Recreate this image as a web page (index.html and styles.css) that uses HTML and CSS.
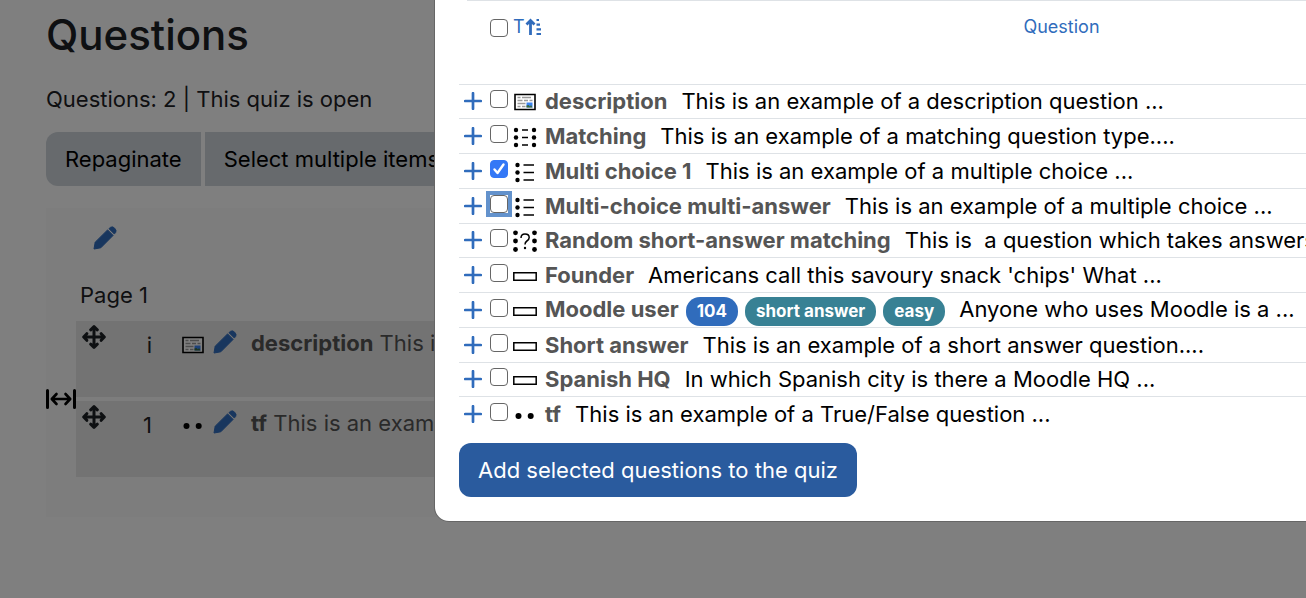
FILE: index.html
```html
<!DOCTYPE html>
<html lang="en">
<head>
<meta charset="utf-8">
<title>Questions</title>
<link rel="stylesheet" href="styles.css">
</head>
<body>
<svg class="sprite" aria-hidden="true">
  <symbol id="pencil" viewBox="0 0 24 24"><path d="M1 23 2.200 16.200 14.600 3.900 20.100 9.400 7.800 21.800Z" stroke="currentColor" stroke-width="1" stroke-linejoin="round" fill="currentColor"/><path d="M15.900 2.700 17.500 1.300Q19.500 0 21.500 2Q24 4.300 22.700 6.500L21.300 8.100Z" fill="currentColor" stroke="currentColor" stroke-width=".8" stroke-linejoin="round"/></symbol>
  <symbol id="move" viewBox="0 0 24 24"><path d="M12 2v20M2 12h20M8.700 4.800 12 1.700l3.300 3.100M8.700 19.200l3.300 3.100 3.300-3.100M4.800 8.700 1.700 12l3.100 3.300M19.200 8.700l3.100 3.300-3.100 3.300" fill="none" stroke="currentColor" stroke-width="3" stroke-linecap="round" stroke-linejoin="round"/></symbol>
  <symbol id="plus" viewBox="0 0 18 18"><path d="M9 1.200v15.600M1.200 9h15.600" stroke="currentColor" stroke-width="2.700" stroke-linecap="round"/></symbol>
  <symbol id="q-description" viewBox="0 0 24 24"><path d="M2 4.500h20v15H2z" fill="#fff" stroke="#000" stroke-width="1.600"/><path d="M4.500 7.500h3M9 7.500h9M4.500 10.500h5M11 10.500h4M16.500 10.500h3M4.500 13.500h8M4.500 16.500h3M9 16.500h3.500" stroke="#9a9a9a" stroke-width="1.400"/><path d="M13.500 12.500h6v5h-6z" fill="#3b83f0"/><path d="M13.500 17.500v-2l2-.5 1.500 1.500 1-1.500 1.500 2.500z" fill="#3d6b3a"/></symbol>
  <symbol id="q-match" viewBox="0 0 24 24"><g><circle cx="3" cy="5" r="2.200"/><circle cx="3" cy="12.500" r="2.200"/><circle cx="3" cy="20" r="2.200"/><circle cx="21" cy="5" r="2.200"/><circle cx="21" cy="12.500" r="2.200"/><circle cx="21" cy="20" r="2.200"/></g><path d="M9 5h6M9 12.500h6M9 20h6" stroke="#000" stroke-width="1.500"/></symbol>
  <symbol id="q-multi" viewBox="0 0 24 24"><circle cx="4.500" cy="5" r="2.200"/><circle cx="4.500" cy="12.500" r="2.200"/><circle cx="4.500" cy="20" r="2.200"/><path d="M10.500 5H21M10.500 12.500H21M10.500 20H21" stroke="#000" stroke-width="1.500"/></symbol>
  <symbol id="q-random" viewBox="0 0 24 24"><circle cx="2.500" cy="3.800" r="2.400"/><circle cx="2.500" cy="12" r="2.400"/><circle cx="2.500" cy="20.500" r="2.400"/><circle cx="21.500" cy="3.800" r="2.400"/><circle cx="21.500" cy="12" r="2.400"/><circle cx="21.500" cy="20.500" r="2.400"/><path d="M8 9q0-4 4-4 4.200 0 4.200 3.600 0 2-2.300 3.400-1.900 1.100-1.900 3.600" fill="none" stroke="#000" stroke-width="1.500"/><circle cx="12" cy="19" r="1.200"/></symbol>
  <symbol id="q-short" viewBox="0 0 24 24"><path d="M.800 8.800h22.400v7.400H.800z" fill="#fff" stroke="#000" stroke-width="1.500"/></symbol>
  <symbol id="q-tf" viewBox="0 0 24 24"><circle cx="5.500" cy="13" r="3"/><circle cx="17.700" cy="13" r="3"/></symbol>
</svg>

<main class="page">
  <h1 class="title">Questions</h1>
  <p class="status">Questions: 2 | This quiz is open</p>
  <div class="toolbar">
    <button class="tool" type="button">Repaginate</button>
    <button class="tool" type="button">Select multiple items</button>
  </div>
  <section class="panel">
    <button class="icon-button heading-edit" type="button" aria-label="Edit heading"><svg class="icon"><use href="#pencil"/></svg></button>
    <h2 class="page-name">Page 1</h2>
    <ul class="slots">
      <li class="slot">
        <svg class="icon move"><use href="#move"/></svg>
        <span class="number">i</span>
        <svg class="icon kind"><use href="#q-description"/></svg>
        <svg class="icon edit"><use href="#pencil"/></svg>
        <span class="slot-text"><b>description</b> This is</span>
      </li>
      <li class="slot">
        <svg class="icon move"><use href="#move"/></svg>
        <span class="number">1</span>
        <svg class="icon kind"><use href="#q-tf"/></svg>
        <svg class="icon edit"><use href="#pencil"/></svg>
        <span class="slot-text"><b>tf</b> This is an example</span>
      </li>
      <li class="split"><svg viewBox="0 0 30 20"><path d="M1.500 1.500v17M28.500 1.500v17" stroke="#000" stroke-width="3" stroke-linecap="round"/><path d="M6 10h18M10.500 5 5.800 10l4.700 5M19.500 5l4.700 5-4.700 5" fill="none" stroke="#000" stroke-width="2.600" stroke-linecap="round" stroke-linejoin="round"/></svg></li>
    </ul>
  </section>
</main>

<div class="backdrop"></div>
<div class="modal" role="dialog" aria-label="Add from the question bank">
  <div class="rule"></div>
  <table class="bank">
    <thead>
      <tr>
        <th class="col-add"></th>
        <th class="col-check"><input class="check" type="checkbox" aria-label="Select all"></th>
        <th class="col-kind"><a class="sort" href="#">T<svg class="sort-icon" viewBox="0 0 16 18"><path d="M5.500 17V3M1.500 6.500l4-4 4 4" fill="none" stroke="currentColor" stroke-width="2.800"/><path d="M11.500 2h2.500M11.500 6.700h3.500M11.500 11.300h4.500M11.500 16h4.500" stroke="currentColor" stroke-width="2.200"/></svg></a></th>
        <th class="col-question"><a class="sort" href="#">Question</a></th>
      </tr>
    </thead>
    <tbody>
      <tr><td><button class="icon-button" type="button" aria-label="Add"><svg class="plus"><use href="#plus"/></svg></button></td><td><input class="check" type="checkbox" id="q1"></td><td><svg class="icon"><use href="#q-description"/></svg></td><td><label class="name" for="q1">description</label><span class="text">This is an example of a description question ...</span></td></tr>
      <tr><td><button class="icon-button" type="button" aria-label="Add"><svg class="plus"><use href="#plus"/></svg></button></td><td><input class="check" type="checkbox" id="q2"></td><td><svg class="icon"><use href="#q-match"/></svg></td><td><label class="name" for="q2">Matching</label><span class="text">This is an example of a matching question type....</span></td></tr>
      <tr><td><button class="icon-button" type="button" aria-label="Add"><svg class="plus"><use href="#plus"/></svg></button></td><td><input class="check" type="checkbox" id="q3" checked></td><td><svg class="icon"><use href="#q-multi"/></svg></td><td><label class="name" for="q3">Multi choice 1</label><span class="text">This is an example of a multiple choice ...</span></td></tr>
      <tr><td><button class="icon-button" type="button" aria-label="Add"><svg class="plus"><use href="#plus"/></svg></button></td><td><div class="focus-ring"><input class="check" type="checkbox" id="q4"></div></td><td><svg class="icon"><use href="#q-multi"/></svg></td><td><label class="name" for="q4">Multi-choice multi-answer</label><span class="text">This is an example of a multiple choice ...</span></td></tr>
      <tr><td><button class="icon-button" type="button" aria-label="Add"><svg class="plus"><use href="#plus"/></svg></button></td><td><input class="check" type="checkbox" id="q5"></td><td><svg class="icon"><use href="#q-random"/></svg></td><td><label class="name" for="q5">Random short-answer matching</label><span class="text">This is&nbsp; a question which takes answers</span></td></tr>
      <tr><td><button class="icon-button" type="button" aria-label="Add"><svg class="plus"><use href="#plus"/></svg></button></td><td><input class="check" type="checkbox" id="q6"></td><td><svg class="icon"><use href="#q-short"/></svg></td><td><label class="name" for="q6">Founder</label><span class="text">Americans call this savoury snack 'chips' What ...</span></td></tr>
      <tr><td><button class="icon-button" type="button" aria-label="Add"><svg class="plus"><use href="#plus"/></svg></button></td><td><input class="check" type="checkbox" id="q7"></td><td><svg class="icon"><use href="#q-short"/></svg></td><td><label class="name" for="q7">Moodle user</label><span class="tags"><span class="tag id">104</span><span class="tag">short answer</span><span class="tag">easy</span></span><span class="text">Anyone who uses Moodle is a ...</span></td></tr>
      <tr><td><button class="icon-button" type="button" aria-label="Add"><svg class="plus"><use href="#plus"/></svg></button></td><td><input class="check" type="checkbox" id="q8"></td><td><svg class="icon"><use href="#q-short"/></svg></td><td><label class="name" for="q8">Short answer</label><span class="text">This is an example of a short answer question....</span></td></tr>
      <tr><td><button class="icon-button" type="button" aria-label="Add"><svg class="plus"><use href="#plus"/></svg></button></td><td><input class="check" type="checkbox" id="q9"></td><td><svg class="icon"><use href="#q-short"/></svg></td><td><label class="name" for="q9">Spanish HQ</label><span class="text">In which Spanish city is there a Moodle HQ ...</span></td></tr>
      <tr><td><button class="icon-button" type="button" aria-label="Add"><svg class="plus"><use href="#plus"/></svg></button></td><td><input class="check" type="checkbox" id="q10"></td><td><svg class="icon"><use href="#q-tf"/></svg></td><td><label class="name" for="q10">tf</label><span class="text">This is an example of a True/False question ...</span></td></tr>
    </tbody>
  </table>
  <button class="submit" type="button">Add selected questions to the quiz</button>
</div>
</body>
</html>
```
FILE: styles.css
```css
* { box-sizing: border-box; }
html, body { height: 100%; }
body {
  margin: 0;
  position: relative;
  overflow: hidden;
  background: #fff;
  color: #1d2125;
  font: 22px/32px Inter, "Liberation Sans", sans-serif;
}
button { font: inherit; border: 0; padding: 0; cursor: pointer; }
.sprite { position: absolute; width: 0; height: 0; }
.icon { display: block; width: 24px; height: 24px; }
.icon-button { display: block; background: none; color: #306cbc; }

.page { padding: 9px 0 0 46px; }
.title { margin: 0 0 22px; font-size: 42px; line-height: 52px; font-weight: 500; }
.status { margin: 0 0 17px; }
.toolbar { display: flex; gap: 4px; }
.tool {
  height: 54px;
  padding: 0 19px;
  background: #ced4da;
  color: #000;
  white-space: nowrap;
}
.tool:first-child { border-radius: 12px 0 0 12px; }
.tool:last-child { border-radius: 0 12px 12px 0; }
.panel { margin-top: 22px; padding: 18px 0 40px 30px; background: #fafafa; }
.heading-edit { margin-left: 17px; }
.page-name { margin: 29px 0 10px 4px; font-size: 22px; line-height: 32px; font-weight: 400; }
.slots {
  position: relative;
  display: flex;
  flex-direction: column;
  gap: 4px;
  margin: 0;
  padding: 0;
  list-style: none;
}
.slot {
  display: grid;
  grid-template-columns: 24px 38px 24px 24px 1fr;
  column-gap: 8px;
  align-items: start;
  height: 76px;
  padding: 4px 0 0 6px;
  background: #e6e6e6;
}
.number { padding: 4px 0; text-align: right; }
.slot .kind { margin: 8px 0 0 21px; }
.slot .edit { margin: 5px 0 0 21px; color: #306cbc; }
.slot-text { margin: 2px 0 0 27px; color: #555; white-space: nowrap; }
.split { position: absolute; left: -30px; top: 68px; width: 30px; height: 20px; }
.split svg { display: block; }

.backdrop { position: absolute; inset: 0; background: rgba(0, 0, 0, .5); }
.modal {
  position: absolute;
  left: 435px;
  right: -296px;
  top: 0;
  padding: 0 24px 24px;
  background: #fff;
  border-radius: 0 0 0 14px;
  box-shadow: 0 0 0 1px #666;
  color: #000;
}
.rule { margin-left: 8px; border-top: 1px solid #dee2e6; }
.bank { width: 100%; border-collapse: collapse; table-layout: fixed; }
.bank th, .bank td { padding: 0; text-align: left; white-space: nowrap; }
.bank th { height: 83px; vertical-align: top; padding-top: 16px; line-height: 20px; }
.col-add { width: 28px; }
.col-check { width: 26px; }
.col-kind { width: 32px; }
.bank .col-question { text-align: center; }
.bank td { height: 35px; border-top: 1px solid #dee2e6; vertical-align: middle; line-height: 32px; }
.bank tr:nth-child(4n+1) td { height: 34px; }
.bank tbody .icon { margin-top: 2px; }
.plus { display: block; width: 18px; height: 18px; margin-left: 5px; }
.check {
  appearance: none;
  display: block;
  width: 18px;
  height: 18px;
  margin: 0 0 0 3px;
  border: 1px solid #666;
  border-radius: 4px;
  background: #fff;
}
thead .check { margin-top: 2px; }
tbody .check { margin-bottom: 4px; }
.check:checked {
  border-color: #3478f6;
  background: #3478f6 url("data:image/svg+xml,%3Csvg xmlns='http://www.w3.org/2000/svg' viewBox='0 0 16 16'%3E%3Cpath d='M3.500 8.500 6.500 12 12.500 3.500' fill='none' stroke='white' stroke-width='2.400' stroke-linecap='round' stroke-linejoin='round'/%3E%3C/svg%3E") center / 16px 16px;
}
.focus-ring {
  width: 18px;
  height: 18px;
  margin: 0 0 4px 3px;
  outline: 4px solid #6392cc;
}
.focus-ring .check { margin: 0; }
.sort {
  display: flex;
  align-items: center;
  justify-content: center;
  font-size: 18px;
  font-weight: 400;
  color: #306cbc;
  text-decoration: none;
}
.col-kind .sort { justify-content: flex-start; }
.sort-icon { flex: none; width: 16px; height: 18px; }
.name { color: #555; font-weight: 700; }
.text { margin-left: 14px; }
.tags { display: inline-flex; gap: 7px; margin-left: 7px; vertical-align: middle; }
.tag {
  padding: 0 11px;
  border-radius: 14px;
  background: #388194;
  color: #fff;
  font-size: 17px;
  line-height: 29px;
  font-weight: 700;
}
.tag.id { background: #306cbc; }
.submit {
  display: block;
  height: 54px;
  margin-top: 12px;
  padding: 0 19px;
  border-radius: 12px;
  background: #2a5b9e;
  color: #fff;
}
```
